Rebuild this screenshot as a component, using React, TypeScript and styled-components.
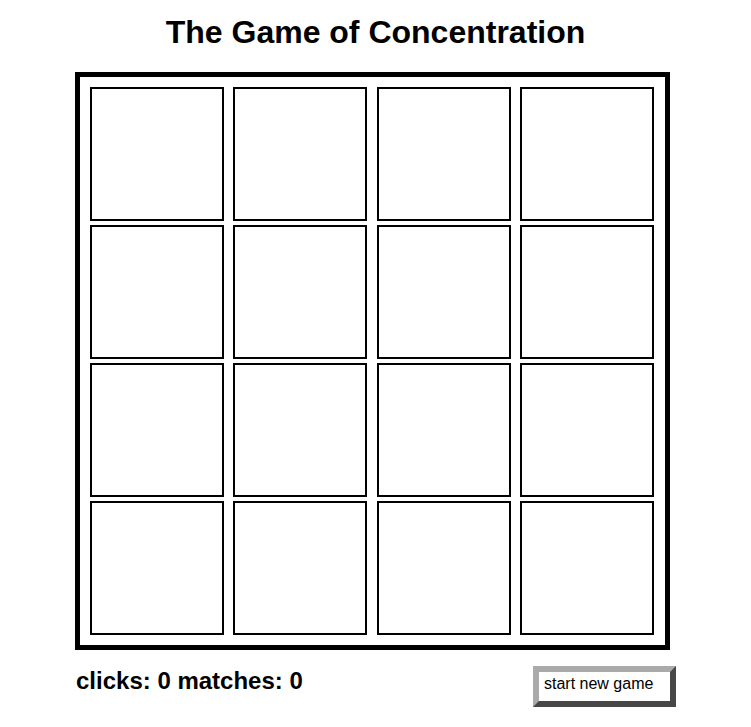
import { useState } from 'react';
import styled, { createGlobalStyle } from 'styled-components';

const symbols = ['A', 'B', 'C', 'D', 'E', 'F', 'G', 'H'];

interface Card {
  id: number;
  symbol: string;
  shown: boolean;
  matched: boolean;
}

const newDeck = (): Card[] =>
  [...symbols, ...symbols]
    .map((symbol) => ({ symbol, sort: Math.random() }))
    .sort((a, b) => a.sort - b.sort)
    .map((c, i) => ({ id: i, symbol: c.symbol, shown: false, matched: false }));

const App = () => {
  const [cards, setCards] = useState<Card[]>(newDeck);
  const [clicks, setClicks] = useState(0);
  const [matches, setMatches] = useState(0);

  const handleClick = (id: number) => {
    const card = cards[id];
    if (card.shown || card.matched) return;
    const open = cards.filter((c) => c.shown && !c.matched);
    setClicks(clicks + 1);

    if (open.length === 2) {
      // hide the previous pair before turning the new one
      setCards(
        cards.map((c) =>
          c.id === id ? { ...c, shown: true } : c.matched ? c : { ...c, shown: false }
        )
      );
      return;
    }

    if (open.length === 1 && open[0].symbol === card.symbol) {
      setMatches(matches + 1);
      setCards(
        cards.map((c) =>
          c.id === id || c.id === open[0].id ? { ...c, shown: true, matched: true } : c
        )
      );
      return;
    }

    setCards(cards.map((c) => (c.id === id ? { ...c, shown: true } : c)));
  };

  const restart = () => {
    setCards(newDeck());
    setClicks(0);
    setMatches(0);
  };

  return (
    <>
      <GlobalStyle />
      <Page>
        <Title>The Game of Concentration</Title>
        <Board>
          {cards.map((card) => (
            <Tile key={card.id} onClick={() => handleClick(card.id)}>
              {card.shown ? card.symbol : ''}
            </Tile>
          ))}
        </Board>
        <Footer>
          <Stats>
            clicks: {clicks} matches: {matches}
          </Stats>
          <NewGameButton onClick={restart}>start new game</NewGameButton>
        </Footer>
      </Page>
    </>
  );
};

export default App;

const GlobalStyle = createGlobalStyle`
  body {
    margin: 0;
    background: #fff;
    color: #000;
    font-family: "Liberation Sans", Arial, Helvetica, sans-serif;
  }
`;

const Page = styled.div`
  width: 751px;
  padding-bottom: 20px;
`;

const Title = styled.h1`
  margin: 14px 0 22px;
  font-size: 32px;
  line-height: 36px;
  font-weight: bold;
  text-align: center;
`;

const Board = styled.div`
  box-sizing: border-box;
  width: 595px;
  height: 578px;
  margin-left: 75px;
  padding: 10px 11px 10px 10px;
  border: 5px solid #000;
  display: grid;
  grid-template-columns: repeat(4, 134px);
  grid-auto-rows: 134px;
  justify-content: space-between;
  row-gap: 4px;
`;

const Tile = styled.div`
  box-sizing: border-box;
  border: 2px solid #000;
  background: #fff;
  display: flex;
  align-items: center;
  justify-content: center;
  font-size: 64px;
  font-weight: bold;
  cursor: pointer;
  user-select: none;
`;

const Footer = styled.div`
  width: 601px;
  margin: 16px 0 0 75px;
  display: flex;
  justify-content: space-between;
  align-items: flex-start;
`;

const Stats = styled.div`
  padding: 1px 0 0 1px;
  font-size: 24px;
  line-height: 28px;
  font-weight: bold;
`;

const NewGameButton = styled.button`
  box-sizing: border-box;
  width: 143px;
  height: 41px;
  padding: 0 0 5px 5px;
  border-style: solid;
  border-width: 6px;
  border-color: #aaa #474747 #474747 #aaa;
  background: #fff;
  color: #000;
  font-family: "Liberation Sans", Arial, Helvetica, sans-serif;
  font-size: 16px;
  line-height: 24px;
  text-align: left;
  cursor: pointer;
`;
